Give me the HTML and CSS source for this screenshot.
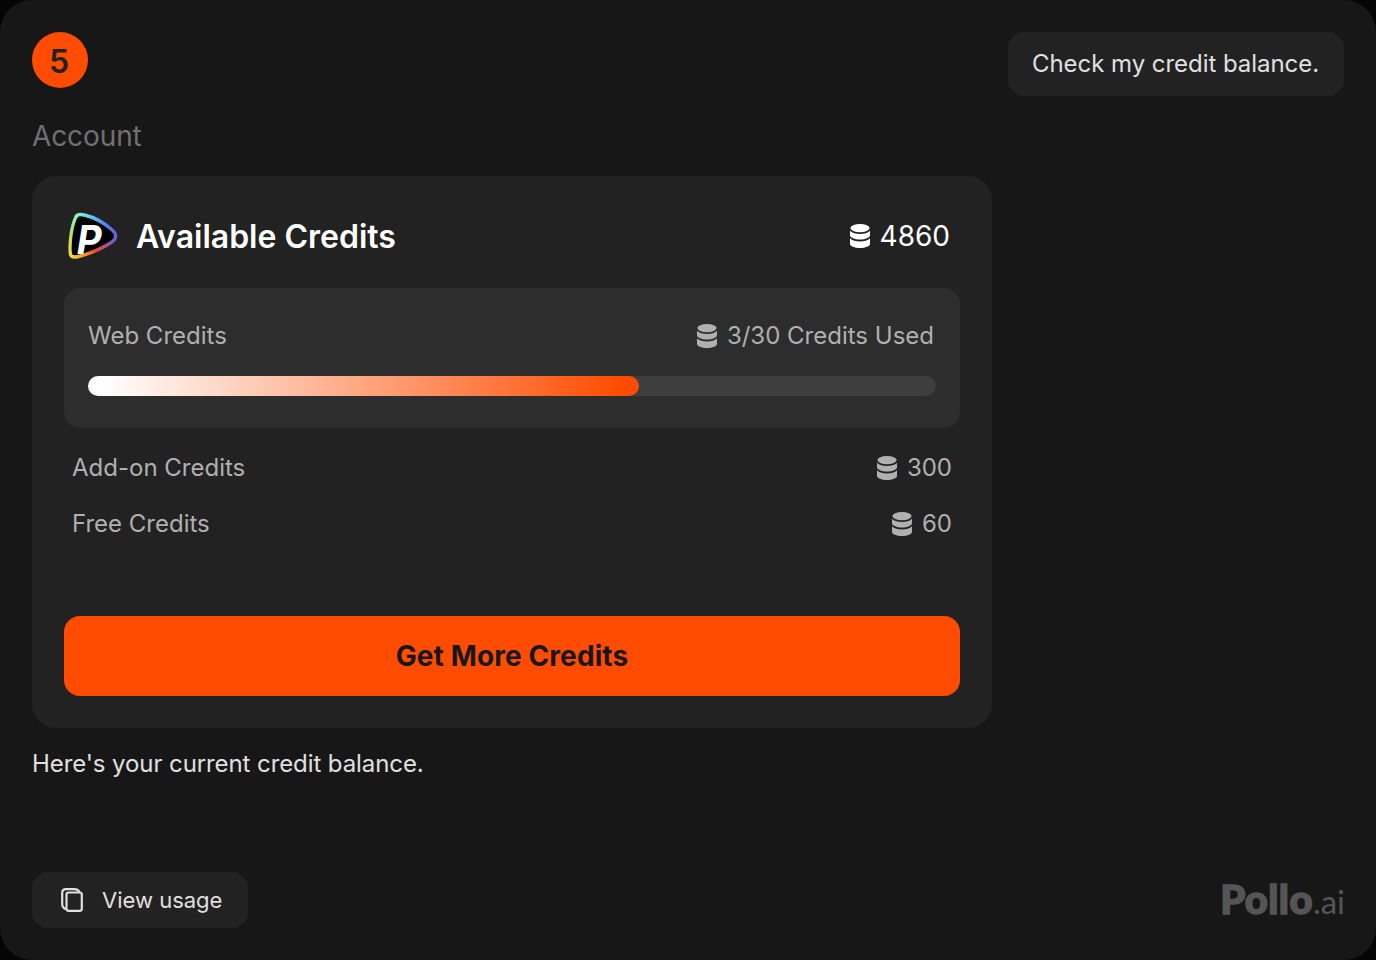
FILE: index.html
```html
<!DOCTYPE html>
<html lang="en">
  <head>
    <meta charset="UTF-8" />
    <meta name="viewport" content="width=device-width, initial-scale=1.0" />
    <title>Account - Available Credits</title>
    <link rel="stylesheet" href="styles.css">
  </head>
  <body>
    <!-- Shared coin stack icon -->
    <svg class="sprite" width="0" height="0">
      <symbol id="coins" viewBox="0 0 20 24">
        <ellipse cx="10" cy="4.1" rx="9.6" ry="4.1" />
        <path d="M0 6.7C2 9 6 10 10 10s8-1 10-3.300V11.300C20 13.600 15.500 15.600 10 15.600S0 13.600 0 11.300z" />
        <path d="M0 14.300C2 16.600 6 17.600 10 17.600s8-1 10-3.300V20C20 22.200 15.500 24 10 24S0 22.200 0 20z" />
      </symbol>
    </svg>

    <div class="panel">
      <div class="top">
        <div class="step">5</div>
        <div class="bubble">Check my credit balance.</div>
      </div>

      <div class="section-title">Account</div>

      <div class="card">
        <div class="card-header">
          <svg class="logo" width="50" height="48" viewBox="0 0 52 48" preserveAspectRatio="none">
            <defs>
              <linearGradient id="edgeTop" gradientUnits="userSpaceOnUse" x1="8" y1="4" x2="50" y2="24">
                <stop offset="0" stop-color="#8ff0c0" />
                <stop offset="0.25" stop-color="#62d9f0" />
                <stop offset="0.65" stop-color="#4a8cf0" />
                <stop offset="1" stop-color="#6a5be0" />
              </linearGradient>
              <linearGradient id="edgeBottom" gradientUnits="userSpaceOnUse" x1="50" y1="24" x2="4" y2="46">
                <stop offset="0" stop-color="#6a5be0" />
                <stop offset="0.22" stop-color="#a052a0" />
                <stop offset="0.5" stop-color="#ea4a38" />
                <stop offset="0.78" stop-color="#f5a02c" />
                <stop offset="1" stop-color="#f5d53c" />
              </linearGradient>
              <linearGradient id="edgeLeft" gradientUnits="userSpaceOnUse" x1="4" y1="45" x2="10" y2="3">
                <stop offset="0" stop-color="#f5d53c" />
                <stop offset="0.5" stop-color="#b4e45a" />
                <stop offset="1" stop-color="#8ff0c0" />
              </linearGradient>
            </defs>
            <path d="M8.500 4.500C10 2.200 13 2 17 3C28 5.500 38 11 46 18C51.500 22.500 51 27 45 30.500C34 37 22 42 11 44.500C5.500 45.800 3.200 45 2.300 41C1.500 30 3.500 14 8.500 4.500z" fill="#000" />
            <g fill="none" stroke-width="3.4" stroke-linecap="round">
              <path d="M5 44.700C3.500 44.500 2.500 43 2.300 41C1.500 30 3.500 14 8.500 4.500" stroke="url(#edgeLeft)" />
              <path d="M8.500 4.500C10 2.200 13 2 17 3C28 5.500 38 11 46 18C48.700 20.200 49.800 22.500 49.500 24.600" stroke="url(#edgeTop)" />
              <path d="M49.500 24.600C49.200 26.800 47.800 28.800 45 30.500C34 37 22 42 11 44.500C8.500 45.100 6.500 45.200 5 44.700" stroke="url(#edgeBottom)" />
            </g>
            <text class="logo-letter" x="9" y="42">P</text>
          </svg>
          <div class="card-title">Available Credits</div>
          <div class="amount total">
            <svg width="20" height="24"><use href="#coins" /></svg>
            <span>4860</span>
          </div>
        </div>

        <!-- Web credits with progress bar -->
        <div class="web-credits">
          <div class="row">
            <span>Web Credits</span>
            <div class="amount">
              <svg width="20" height="24"><use href="#coins" /></svg>
              <span>3/30 Credits Used</span>
            </div>
          </div>
          <div class="progress">
            <div class="progress-fill" style="width: 65%"></div>
          </div>
        </div>

        <div class="other-credits">
          <div class="row">
            <span>Add-on Credits</span>
            <div class="amount">
              <svg width="20" height="24"><use href="#coins" /></svg>
              <span>300</span>
            </div>
          </div>
          <div class="row">
            <span>Free Credits</span>
            <div class="amount">
              <svg width="20" height="24"><use href="#coins" /></svg>
              <span>60</span>
            </div>
          </div>
        </div>

        <button class="more-btn" type="button">Get More Credits</button>
      </div>

      <div class="reply">Here's your current credit balance.</div>

      <div class="footer">
        <button class="usage-btn" type="button">
          <svg width="24" height="26" viewBox="0 0 24 26" fill="none" stroke="#e0e0e0" stroke-width="2.2">
            <rect x="6.500" y="5.500" width="15.300" height="18.300" rx="2" />
            <path d="M6.500 22.300C3.500 21.500 2.200 20 2.200 17V6C2.200 3.500 3.500 2.200 6 2.200H14C17 2.200 18.800 3.200 19.500 5.500" />
          </svg>
          View usage
        </button>
        <div class="brand"><span class="brand-name">Pollo</span><span class="brand-tld">.ai</span></div>
      </div>
    </div>
  </body>
</html>
```

FILE: styles.css
```css
* {
  box-sizing: border-box;
}

body {
  margin: 0;
  background: #050505;
  font-family: 'Inter', sans-serif;
  font-size: 24px;
  color: #e0e0e0;
}

.sprite {
  display: block;
}

.panel {
  display: flex;
  flex-direction: column;
  width: 1376px;
  height: 960px;
  padding: 32px;
  background: #171717;
  border-radius: 32px;
}

.top {
  display: flex;
  justify-content: space-between;
  align-items: flex-start;
  height: 64px;
}

.step {
  width: 56px;
  height: 56px;
  padding-right: 2px;
  border-radius: 50%;
  background: #ff4c00;
  color: #222;
  font-size: 32px;
  font-weight: 600;
  line-height: 59px;
  text-align: center;
}

.bubble {
  width: 336px;
  height: 64px;
  padding-left: 24px;
  border-radius: 16px;
  background: #222;
  line-height: 63px;
  letter-spacing: -0.05px;
  white-space: nowrap;
}

.section-title {
  height: 80px;
  font-size: 28px;
  line-height: 81px;
  letter-spacing: -0.1px;
  color: #707070;
}

/* Credits card */
.card {
  display: flex;
  flex-direction: column;
  width: 960px;
  height: 552px;
  padding: 32px;
  border-radius: 24px;
  background: #222;
}

.card-header {
  display: flex;
  align-items: center;
  height: 56px;
  padding: 0 10px 0 4px;
  margin-bottom: 24px;
  color: #fff;
}

.logo {
  margin-right: 18px;
  overflow: visible;
}

.logo-letter {
  font-size: 40px;
  font-weight: 700;
  font-style: italic;
  fill: #fff;
}

.card-title {
  flex: 1;
  font-size: 32px;
  font-weight: 600;
}

.amount {
  display: flex;
  align-items: center;
  gap: 10px;
}

.amount svg {
  fill: currentColor;
}

.total {
  font-size: 28px;
}

.row {
  display: flex;
  justify-content: space-between;
  align-items: center;
  height: 32px;
  line-height: 30px;
  color: #b0b0b0;
}

.web-credits {
  height: 140px;
  padding: 32px 24px;
  border-radius: 16px;
  background: #2d2d2d;
}

.web-credits .amount {
  padding-right: 2px;
}

.progress {
  height: 20px;
  margin-top: 24px;
  border-radius: 10px;
  background: #3e3e3e;
}

.progress-fill {
  height: 20px;
  border-radius: 10px;
  background: linear-gradient(90deg, #fff 3%, #ff4c00 97%);
}

.other-credits {
  display: flex;
  flex-direction: column;
  gap: 24px;
  padding: 24px 8px;
}

/* Buttons */
button {
  border: none;
  font-family: inherit;
  cursor: pointer;
}

.more-btn {
  height: 80px;
  margin-top: auto;
  border-radius: 16px;
  background: #ff4c00;
  color: #171717;
  font-size: 28px;
  font-weight: 700;
  letter-spacing: 0.1px;
}

.reply {
  line-height: 72px;
  letter-spacing: -0.09px;
}

.footer {
  display: flex;
  justify-content: space-between;
  align-items: center;
  height: 56px;
  margin-top: auto;
}

.usage-btn {
  display: flex;
  align-items: center;
  gap: 18px;
  width: 216px;
  height: 56px;
  padding: 0 0 0 28px;
  border-radius: 16px;
  background: #222;
  color: #e0e0e0;
  font-size: 22px;
}

.brand {
  margin-right: -1px;
  padding-bottom: 2px;
  color: #555;
  font-family: 'Lato', sans-serif;
  white-space: nowrap;
}

.brand-name {
  font-size: 40px;
  font-weight: 900;
  letter-spacing: 0.4px;
  -webkit-text-stroke: 1.5px #555;
}

.brand-tld {
  font-size: 33px;
}
```
